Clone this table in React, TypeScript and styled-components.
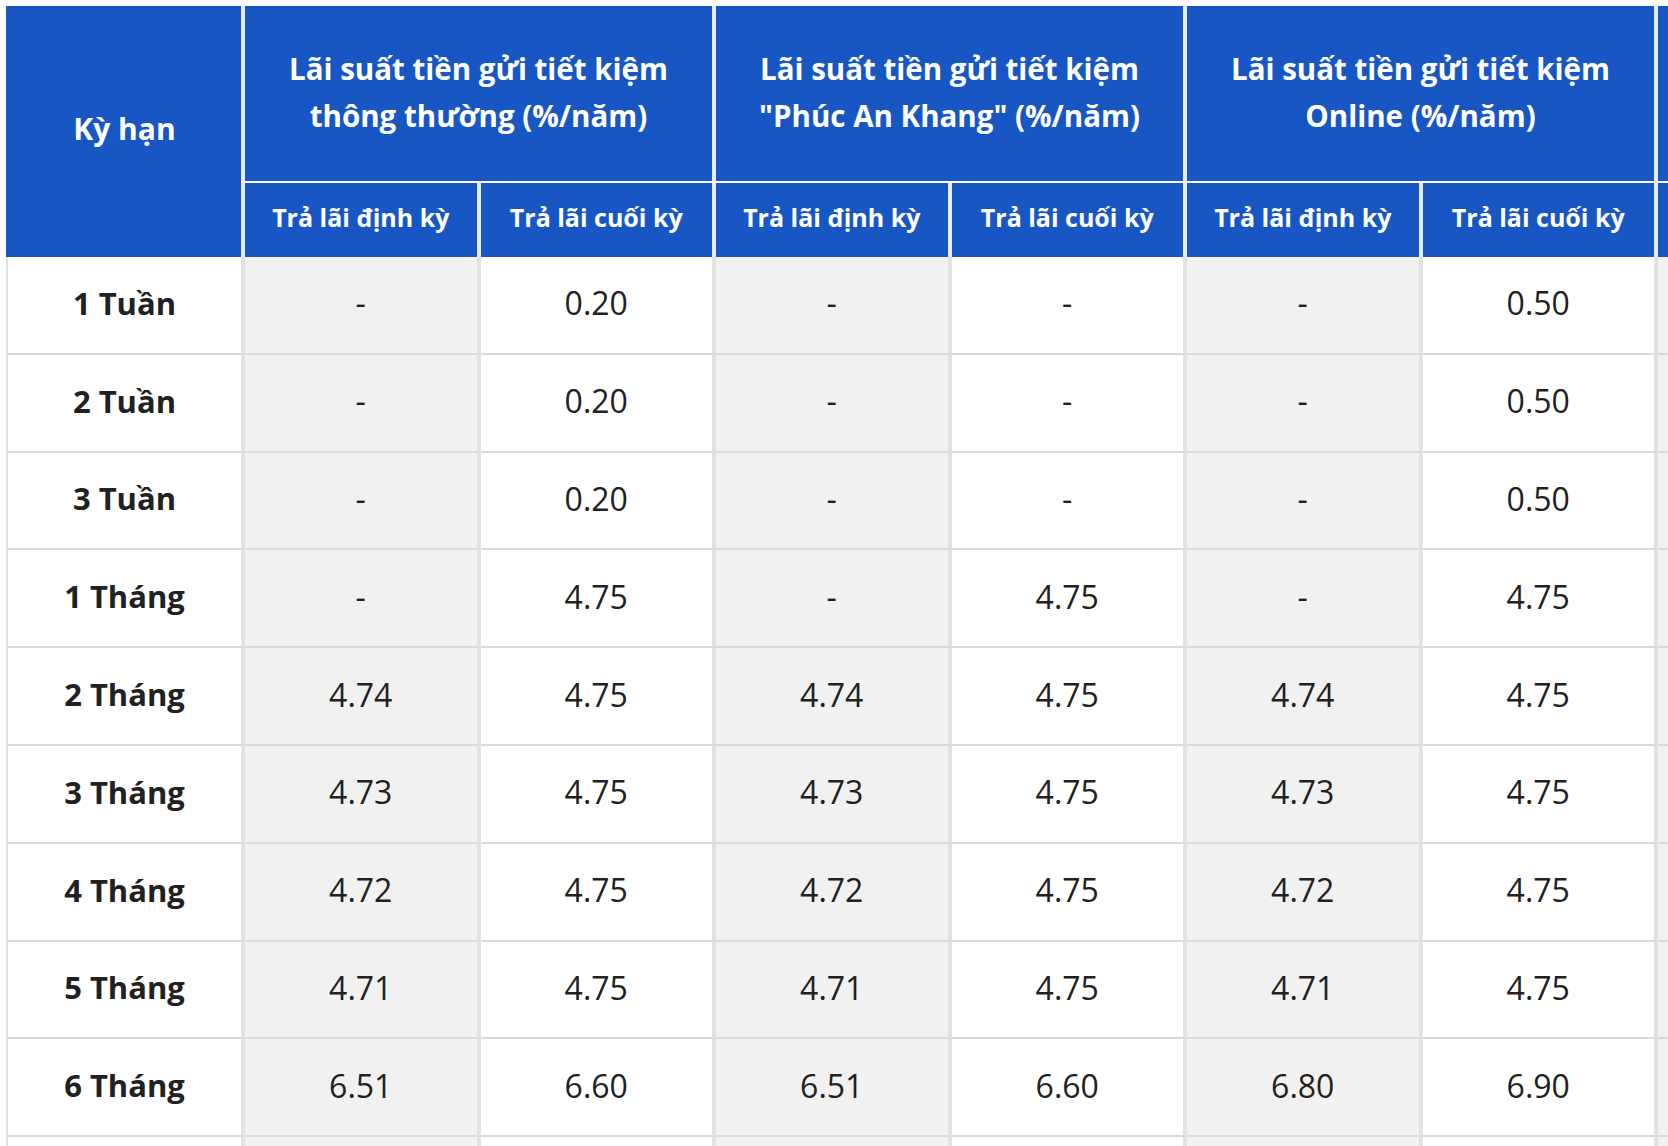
import * as React from "react";
import styled, { createGlobalStyle } from "styled-components";

// bảng lãi suất tiền gửi
interface RateRow {
    term: string;
    values: string[];
}

// nhóm thứ tư chỉ lộ một mép ở rìa phải, không thấy chữ
const GROUPS: string[][] = [
    ["Lãi suất tiền gửi tiết kiệm", "thông thường (%/năm)"],
    ["Lãi suất tiền gửi tiết kiệm", "\"Phúc An Khang\" (%/năm)"],
    ["Lãi suất tiền gửi tiết kiệm", "Online (%/năm)"],
    [],
];

const ROWS: RateRow[] = [
    { term: "1 Tuần", values: ["-", "0.20", "-", "-", "-", "0.50", ""] },
    { term: "2 Tuần", values: ["-", "0.20", "-", "-", "-", "0.50", ""] },
    { term: "3 Tuần", values: ["-", "0.20", "-", "-", "-", "0.50", ""] },
    { term: "1 Tháng", values: ["-", "4.75", "-", "4.75", "-", "4.75", ""] },
    { term: "2 Tháng", values: ["4.74", "4.75", "4.74", "4.75", "4.74", "4.75", ""] },
    { term: "3 Tháng", values: ["4.73", "4.75", "4.73", "4.75", "4.73", "4.75", ""] },
    { term: "4 Tháng", values: ["4.72", "4.75", "4.72", "4.75", "4.72", "4.75", ""] },
    { term: "5 Tháng", values: ["4.71", "4.75", "4.71", "4.75", "4.71", "4.75", ""] },
    { term: "6 Tháng", values: ["6.51", "6.60", "6.51", "6.60", "6.80", "6.90", ""] },
    { term: "", values: ["", "", "", "", "", "", ""] },
];

const BLUE = "#1857c3";

const GlobalStyle = createGlobalStyle`
    html, body {
        margin: 0;
        padding: 0;
        background: #ffffff;
        overflow: hidden;
    }
    body {
        font-family: "Open Sans", "Liberation Sans", sans-serif;
        color: #212121;
    }
`;

const Wrapper = styled.div`
    padding: 6px 0 0 6px;
    width: max-content;
`;

const Table = styled.table`
    border-collapse: separate;
    border-spacing: 0;
    table-layout: fixed;
`;

const Col = styled.col<{ $first?: boolean }>`
    width: ${props => (props.$first ? "239px" : "235.5px")};
`;

const GroupRow = styled.tr`
    height: 177px;
`;

const SubRow = styled.tr`
    height: 74px;
`;

const BodyRow = styled.tr`
    height: 97.8px;
`;

const TermHead = styled.th`
    background: ${BLUE};
    color: #ffffff;
    font-size: 30px;
    font-weight: 700;
    text-align: center;
    vertical-align: middle;
    padding: 0 0 6px;
    border-left: 2px solid ${BLUE};
    border-right: 4px solid #e8edf5;
`;

const GroupHead = styled.th`
    background: ${BLUE};
    color: #ffffff;
    font-size: 29.5px;
    font-weight: 700;
    line-height: 47px;
    text-align: center;
    vertical-align: middle;
    padding: 0 8px 4px;
    border-right: 4px solid #e8edf5;
    border-bottom: 2.5px solid #ffffff;
    white-space: nowrap;
`;

const SubHead = styled.th`
    background: ${BLUE};
    color: #ffffff;
    font-size: 25px;
    font-weight: 700;
    text-align: center;
    vertical-align: middle;
    padding: 0 0 6px;
    border-right: 4px solid #e8edf5;
    white-space: nowrap;
`;

const TermCell = styled.td`
    background: #ffffff;
    font-size: 31px;
    font-weight: 700;
    text-align: center;
    vertical-align: middle;
    padding: 0 0 4px;
    border-left: 2px solid #e2e2e2;
    border-right: 4px solid #e2e2e2;
    border-bottom: 2px solid #dadada;
    white-space: nowrap;
`;

const ValueCell = styled.td<{ $shaded: boolean }>`
    background: ${props => (props.$shaded ? "#f1f1f1" : "#ffffff")};
    font-size: 32px;
    font-weight: 400;
    text-align: center;
    vertical-align: middle;
    padding: 0 0 4px;
    border-right: 4px solid #e2e2e2;
    border-bottom: 2px solid #dadada;
    white-space: nowrap;
`;

const App: React.FC = () => {
    return (
        <Wrapper>
            <GlobalStyle />
            <Table>
                <colgroup>
                    <Col $first />
                    {Array.from({ length: 8 }).map((_, i) => (
                        <Col key={i} />
                    ))}
                </colgroup>
                <thead>
                    <GroupRow>
                        <TermHead rowSpan={2}>Kỳ hạn</TermHead>
                        {GROUPS.map((lines, i) => (
                            <GroupHead key={i} colSpan={2}>
                                {lines.map((line, k) => (
                                    <React.Fragment key={k}>
                                        {k > 0 && <br />}
                                        {line}
                                    </React.Fragment>
                                ))}
                            </GroupHead>
                        ))}
                    </GroupRow>
                    <SubRow>
                        {GROUPS.map((lines, i) => (
                            <React.Fragment key={i}>
                                <SubHead>{lines.length ? "Trả lãi định kỳ" : ""}</SubHead>
                                <SubHead>{lines.length ? "Trả lãi cuối kỳ" : ""}</SubHead>
                            </React.Fragment>
                        ))}
                    </SubRow>
                </thead>
                <tbody>
                    {ROWS.map((row, i) => (
                        <BodyRow key={i}>
                            <TermCell>{row.term}</TermCell>
                            {row.values.map((v, j) => (
                                <ValueCell key={j} $shaded={j % 2 === 0}>
                                    {v}
                                </ValueCell>
                            ))}
                        </BodyRow>
                    ))}
                </tbody>
            </Table>
        </Wrapper>
    );
};

export default App;
